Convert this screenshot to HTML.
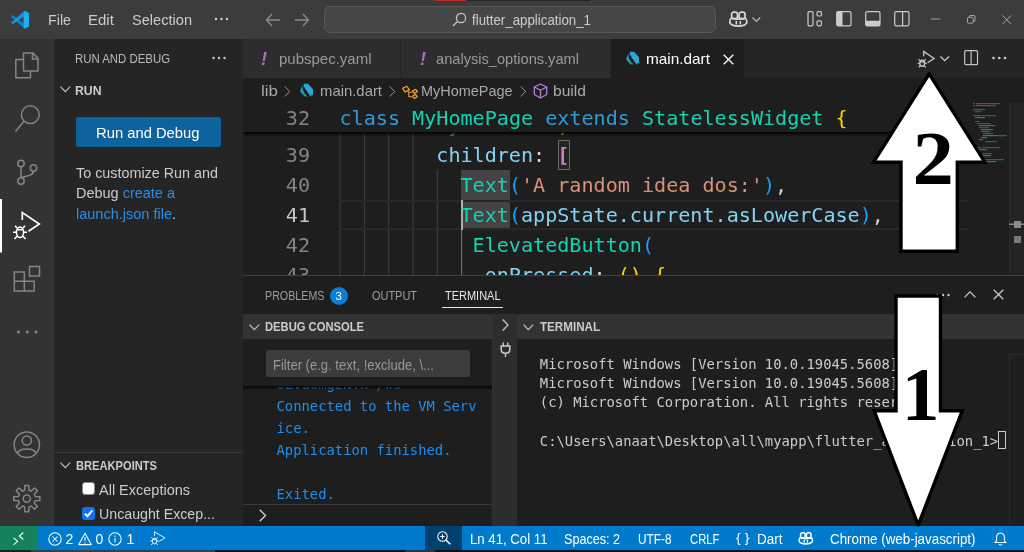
<!DOCTYPE html>
<html lang="en"><head>
<meta charset="utf-8">
<title>main.dart - flutter_application_1 - Visual Studio Code</title>
<style>
*{box-sizing:border-box;margin:0;padding:0}
html,body{width:1024px;height:552px;overflow:hidden;background:#1e1e1e}
body{position:relative;font-family:"Liberation Sans",sans-serif;color:#ccc;font-size:15px}
.abs{position:absolute}
.t{position:absolute;white-space:nowrap;line-height:20px;height:20px}
.mono{font-family:"DejaVu Sans Mono","Liberation Mono",monospace}
svg{position:absolute;overflow:visible}
.ic{fill:none;stroke:#858585;stroke-width:1.5}
/* title bar */
#title{left:0;top:0;width:1024px;height:39px;background:#3c3c3c}
#title .t{font-size:15px;color:#cccccc;top:10px}
#cmd{left:324px;top:6px;width:392px;height:27px;border-radius:6px;background:#464646;border:1px solid #575757}
/* activity bar */
#act{left:0;top:39px;width:54px;height:487px;background:#333333}
/* sidebar */
#side{left:54px;top:39px;width:189px;height:487px;background:#252526}
#side .t{color:#cccccc}
/* editor */
#tabs{left:243px;top:39px;width:781px;height:39px;background:#252526}
.tab{position:absolute;top:0;height:39px;background:#2d2d2d}
#tabs .t{font-size:15px;top:9.900px;color:#9a9a9a}
#crumbs{left:243px;top:78px;width:781px;height:25px;background:#1e1e1e}
#crumbs .t{font-size:15px;color:#a9a9a9;top:3px}
#code{left:243px;top:103px;width:781px;height:172px;background:#1e1e1e;overflow:hidden}
.ln{position:absolute;left:0;width:781px;height:30px;line-height:30px;font-size:20.1px;white-space:pre}
.num{position:absolute;left:0;width:67px;text-align:right;color:#858585}
.src{position:absolute;left:96.500px;top:-0.400px;color:#d4d4d4}
.guide{position:absolute;width:1px;background:#404040}
.k{color:#2e9bdb}.c{color:#14d3b3}.v{color:#84d4f7}.s{color:#d8917a}.y{color:#ffd700}.m{color:#e06fdc;font-weight:bold}.b{color:#179fff}
/* panel */
#panel{left:243px;top:279px;width:781px;height:247px;background:#1e1e1e}
#panel .t{color:#ccc}
/* status */
#status{left:0;top:526px;width:1024px;height:24px;background:#007acc}
#status .t{font-size:14px;color:#fff;top:3px}
#status svg{stroke:#fff;fill:none;stroke-width:1.050}
</style>
</head>
<body>
<div id="app" style="position:absolute;left:0;top:0;width:1024px;height:552px;will-change:transform">

<!-- ================= TITLE BAR ================= -->
<div id="title" class="abs">
  <div class="abs" style="left:435px;top:0;width:31px;height:1px;background:#c62828"></div><div class="abs" style="left:466px;top:0;width:124px;height:1px;background:#262626"></div>
  <svg style="left:0;top:0" width="40" height="39" viewBox="0 0 40 39">
    <polygon points="10.900,16.700 12.500,15 23.700,23.200 23.700,27.800" fill="#0d83c9"></polygon>
    <polygon points="10.900,22.800 12.500,24.300 23.700,16.400 23.700,11.800" fill="#1497de"></polygon>
    <polygon points="23.500,12 24.700,10.800 29,13 29,26.500 24.700,28.700 23.500,27.500" fill="#1eaef3"></polygon>
  </svg>
  <span class="t" style="left: 48px; transform-origin: 0px 50%; transform: scaleX(0.9515);">File</span>
  <span class="t" style="left: 87.8px; transform-origin: 0px 50%; transform: scaleX(0.9977);">Edit</span>
  <span class="t" style="left: 132px; transform-origin: 0px 50%; transform: scaleX(0.9722);">Selection</span>
  <svg style="left:214px;top:17px" width="16" height="4"><circle cx="2" cy="2" r="1.2" fill="#d4d4d4"></circle><circle cx="7.500" cy="2" r="1.2" fill="#d4d4d4"></circle><circle cx="13" cy="2" r="1.2" fill="#d4d4d4"></circle></svg>
  <svg style="left:265px;top:13px" width="16" height="14" viewBox="0 0 16 14"><path d="M7 1 L1.5 7 L7 13 M1.5 7 H15" fill="none" stroke="#8b8b8b" stroke-width="1.3"></path></svg>
  <svg style="left:294px;top:13px" width="16" height="14" viewBox="0 0 16 14"><path d="M9 1 L14.500 7 L9 13 M14.500 7 H1" fill="none" stroke="#8b8b8b" stroke-width="1.3"></path></svg>
  <div id="cmd" class="abs"></div>
  <svg style="left:452px;top:12px" width="15" height="15" viewBox="0 0 15 15"><circle cx="9" cy="6" r="4.6" fill="none" stroke="#ccc" stroke-width="1.2"></circle><path d="M5.6 9.4 L1 14" stroke="#ccc" stroke-width="1.3"></path></svg>
  <span class="t" style="left: 472.3px; top: 9.5px; font-size: 14px; color: rgb(204, 204, 204); transform-origin: 0px 50%; transform: scaleX(0.9496);">flutter_application_1</span>
  <!-- copilot -->
  <svg style="left:729.300px;top:10.500px" width="18.600" height="16.600" viewBox="0 0 18.6 16.6"><g fill="none" stroke="#dadada" stroke-width="1.700"><rect x="2.600" y="1.100" width="5.900" height="6.600" rx="2.300"></rect><rect x="10.100" y="1.100" width="5.900" height="6.600" rx="2.300"></rect><path d="M2.700 6.900 C1.400 7.700 0.900 8.700 0.900 10 V12 C3 16.300 15.600 16.300 17.700 12 V10 C17.700 8.700 17.200 7.700 15.900 6.900 M2.800 7.500 C6 8.500 12.600 8.500 15.800 7.500"></path><path d="M7.300 10 V13.400 M11.300 10 V13.400" stroke-width="1.500"></path></g></svg>
  <svg style="left:752px;top:17px" width="9" height="6" viewBox="0 0 9 6"><path d="M0.500 0.500 L4.300 4.500 L8.200 0.500" fill="none" stroke="#c0c0c0" stroke-width="1.100"></path></svg>
  <!-- layout icons -->
  <svg style="left:807px;top:11.300px" width="16" height="16" viewBox="0 0 16 16"><rect x="1" y="0.700" width="5" height="14.200" rx="1.300" fill="none" stroke="#ccc" stroke-width="1.200"></rect><rect x="10" y="0.700" width="4.500" height="4.300" rx="1.200" fill="none" stroke="#ccc" stroke-width="1.200"></rect><rect x="10" y="9.800" width="4.500" height="5" rx="1.200" fill="none" stroke="#ccc" stroke-width="1.200"></rect></svg>
  <svg style="left:836px;top:11.300px" width="16" height="16" viewBox="0 0 16 16"><rect x="0.700" y="0.700" width="14.300" height="14.200" rx="1.600" fill="none" stroke="#ccc" stroke-width="1.200"></rect><path d="M2 0.700 H6.500 V14.900 H2 C1.200 14.900 0.700 14.400 0.700 13.600 V2 C0.700 1.200 1.200 0.700 2 0.700 Z" fill="#ccc"></path></svg>
  <svg style="left:865px;top:11.300px" width="16" height="16" viewBox="0 0 16 16"><rect x="0.700" y="0.700" width="14.300" height="14.200" rx="1.600" fill="none" stroke="#ccc" stroke-width="1.200"></rect><path d="M0.700 9.800 H15 V13.600 C15 14.400 14.500 14.900 13.700 14.900 H2 C1.200 14.900 0.700 14.400 0.700 13.600 Z" fill="#ccc"></path></svg>
  <svg style="left:893.500px;top:11.300px" width="16" height="16" viewBox="0 0 16 16"><rect x="0.700" y="0.700" width="14.300" height="14.200" rx="1.600" fill="none" stroke="#ccc" stroke-width="1.200"></rect><path d="M8.600 0.700 V14.900" stroke="#ccc" stroke-width="1.200"></path></svg>
  <!-- window controls -->
  <svg style="left:931px;top:18px" width="10" height="2"><path d="M0 1 H9.500" stroke="#9a9a9a" stroke-width="1"></path></svg>
  <svg style="left:967px;top:14.500px" width="9" height="9" viewBox="0 0 9 9"><rect x="0.500" y="2.300" width="5.700" height="5.900" rx="1" fill="none" stroke="#a8a8a8" stroke-width="1"></rect><path d="M2.300 2.300 V1.500 C2.300 0.900 2.700 0.500 3.300 0.500 H7 C7.600 0.500 8 0.900 8 1.500 V5.500 C8 6.100 7.600 6.500 7 6.500 H6.200" fill="none" stroke="#a8a8a8" stroke-width="1"></path></svg>
  <svg style="left:1002px;top:14.500px" width="10" height="10" viewBox="0 0 10 10"><path d="M0.500 0.500 L9 9 M9 0.500 L0.500 9" stroke="#a8a8a8" stroke-width="1"></path></svg>
</div>

<!-- ================= ACTIVITY BAR ================= -->
<div id="act" class="abs">
  <!-- coordinates inside are page coords minus (0,39) ; use a page-coord svg instead -->
</div>
<svg id="acticons" style="left:0;top:0" width="54" height="552" viewBox="0 0 54 552">
  <!-- files -->
  <path class="ic" d="M23.500 71 V53 H33 L38 58.500 V71 Z M32.500 53 V59 H38" stroke-linejoin="round"></path>
  <path class="ic" d="M23 59.500 H15.800 V77.700 H30.500 V71.500" stroke-linejoin="round"></path>
  <!-- search -->
  <circle class="ic" cx="30.300" cy="114.700" r="8.900"></circle>
  <path class="ic" d="M24 121.200 L15.500 131.500"></path>
  <!-- source control -->
  <circle class="ic" cx="21" cy="163.500" r="3.200"></circle>
  <circle class="ic" cx="21" cy="181" r="3.200"></circle>
  <circle class="ic" cx="33.500" cy="168" r="3.200"></circle>
  <path class="ic" d="M21 166.700 V177.800 M33.500 171.200 C33.500 176 27 175.500 21.500 177.500"></path>
  <!-- run and debug (active) -->
  <rect x="0" y="199" width="2" height="53.500" fill="#ffffff"></rect>
  <path d="M22.300 220 V212.500 L39.300 224 L28.500 231.200" fill="none" stroke="#fff" stroke-width="1.700" stroke-linejoin="miter"></path>
  <g stroke="#fff" fill="none" stroke-width="1.600">
    <ellipse cx="20" cy="232.300" rx="3.600" ry="5.200"></ellipse>
    <path d="M17 228 L15 225.800 M23 228 L25 225.800 M16.400 232.300 H13 M23.600 232.300 H27 M17 236.300 L14.500 239 M23 236.300 L25.500 239 M17.300 229.800 H22.700"></path>
  </g>
  <!-- extensions -->
  <path class="ic" d="M14.300 272 H24.300 V281.300 H34.200 V291 H14.300 Z M14.300 281.300 H24.300 V291"></path>
  <rect class="ic" x="29.500" y="266.500" width="10" height="9.500"></rect>
  <!-- more -->
  <circle cx="18.500" cy="332" r="1.500" fill="#858585"></circle><circle cx="27.300" cy="332" r="1.500" fill="#858585"></circle><circle cx="36" cy="332" r="1.500" fill="#858585"></circle>
  <!-- account -->
  <circle class="ic" cx="26.800" cy="444.800" r="12.700"></circle>
  <circle class="ic" cx="26.800" cy="440.500" r="4.600"></circle>
  <path class="ic" d="M17.500 453.500 C19 447.500 34.500 447.500 36 453.500"></path>
  <!-- gear -->
  <g transform="translate(26.800 498.600)">
    <path class="ic" stroke-linejoin="round" d="M-2.20 -8.31 L-1.96 -13.05 L1.96 -13.05 L2.20 -8.31 L4.32 -7.44 L7.84 -10.62 L10.62 -7.84 L7.44 -4.32 L8.31 -2.20 L13.05 -1.96 L13.05 1.96 L8.31 2.20 L7.44 4.32 L10.62 7.84 L7.84 10.62 L4.32 7.44 L2.20 8.31 L1.96 13.05 L-1.96 13.05 L-2.20 8.31 L-4.32 7.44 L-7.84 10.62 L-10.62 7.84 L-7.44 4.32 L-8.31 2.20 L-13.05 1.96 L-13.05 -1.96 L-8.31 -2.20 L-7.44 -4.32 L-10.62 -7.84 L-7.84 -10.62 L-4.32 -7.44 Z"></path>
    <circle class="ic" cx="0" cy="0" r="3.600"></circle>
  </g>
</svg>

<!-- ================= SIDEBAR ================= -->
<div id="side" class="abs"></div>
<div id="sidec" class="abs" style="left:0;top:0;width:243px;height:526px">
  <span class="t" style="left: 75px; top: 49px; font-size: 12.5px; color: rgb(187, 187, 187); transform-origin: 0px 50%; transform: scaleX(0.9118);">RUN AND DEBUG</span>
  <svg style="left:212px;top:56px" width="16" height="4"><circle cx="1.500" cy="2" r="1.200" fill="#ccc"></circle><circle cx="7" cy="2" r="1.200" fill="#ccc"></circle><circle cx="12.500" cy="2" r="1.200" fill="#ccc"></circle></svg>
  <svg style="left:60px;top:86px" width="11" height="7" viewBox="0 0 11 7"><path d="M0.500 0.700 L5.300 5.700 L10.200 0.700" fill="none" stroke="#c5c5c5" stroke-width="1.200"></path></svg>
  <span class="t" style="left: 75.2px; top: 81px; font-size: 12.5px; font-weight: bold; color: rgb(204, 204, 204); transform-origin: 0px 50%; transform: scaleX(0.9781);">RUN</span>
  <div class="abs" style="left:76px;top:117px;width:145px;height:30px;background:#0e639c;border-radius:2px"></div>
  <span class="t" style="left: 96.2px; top: 122.7px; font-size: 15px; color: rgb(255, 255, 255); transform-origin: 0px 50%; transform: scaleX(0.9848);">Run and Debug</span>
  <span class="t" style="left: 76px; top: 163px; font-size: 15px; transform-origin: 0px 50%; transform: scaleX(0.9567);">To customize Run and</span>
  <span class="t" style="left: 76px; top: 183px; font-size: 15px; transform-origin: 0px 50%; transform: scaleX(0.9651);">Debug <span style="color:#2a8eea">create a</span></span>
  <span class="t" style="left: 76px; top: 203.5px; font-size: 15px; transform-origin: 0px 50%; transform: scaleX(0.9671);"><span style="color:#2a8eea">launch.json file</span>.</span>
  <!-- breakpoints -->
  <div class="abs" style="left:54px;top:452px;width:189px;height:1px;background:#3a3a3b"></div>
  <svg style="left:60px;top:462px" width="11" height="7" viewBox="0 0 11 7"><path d="M0.500 0.700 L5.300 5.700 L10.200 0.700" fill="none" stroke="#c5c5c5" stroke-width="1.200"></path></svg>
  <span class="t" style="left: 75.5px; top: 455.5px; font-size: 12.5px; font-weight: bold; color: rgb(204, 204, 204); transform-origin: 0px 50%; transform: scaleX(0.8903);">BREAKPOINTS</span>
  <div class="abs" style="left:82px;top:482px;width:13px;height:13px;background:#fff;border:1px solid #8a8a8a;border-radius:3px"></div>
  <span class="t" style="left: 98.8px; top: 479.5px; font-size: 15px; transform-origin: 0px 50%; transform: scaleX(0.9658);">All Exceptions</span>
  <div class="abs" style="left:82px;top:507px;width:13px;height:13px;background:#1270f2;border-radius:3px"></div>
  <svg style="left:82px;top:507px" width="13" height="13" viewBox="0 0 13 13"><path d="M2.800 6.600 L5.400 9.300 L10.300 3.400" fill="none" stroke="#fff" stroke-width="2"></path></svg>
  <span class="t" style="left: 98.8px; top: 504px; font-size: 15px; transform-origin: 0px 50%; transform: scaleX(0.9463);">Uncaught Excep...</span>
</div>

<!-- ================= EDITOR TABS ================= -->
<div id="tabs" class="abs">
  <div class="tab" style="left:0;width:157px"></div>
  <div class="tab" style="left:158px;width:209px"></div>
  <div class="tab" style="left:368px;width:133px;background:#1e1e1e"></div>
  <span class="t" style="left:18px;font-weight:bold;font-style:italic;color:#a074c4;font-size:18px;top:9.500px">!</span>
  <span class="t" style="left: 35.5px; transform-origin: 0px 50%; transform: scaleX(0.9993);">pubspec.yaml</span>
  <span class="t" style="left:177px;font-weight:bold;font-style:italic;color:#a074c4;font-size:18px;top:9.500px">!</span>
  <span class="t" style="left: 193px; transform-origin: 0px 50%; transform: scaleX(0.9744);">analysis_options.yaml</span>
  <!-- dart icon -->
  <svg style="left:382.500px;top:12px" width="13.500" height="14.500" viewBox="0 0 13.5 14.5"><path d="M4.600 0.600 L8.300 1 L13 6.300 V12.300 H11.200 V13.800 L9.800 12.400 L3.400 3 Z" fill="#29a9d3"></path><path d="M3.300 1.600 L0.400 6.600 C0 8 0.400 9 1.300 10 L4.600 13.400 H7.800 L5.500 11.500 C3.500 9 2.600 6 2.500 4 Z" fill="#2496bd"></path></svg>
  <span class="t" style="left: 402.8px; color: rgb(255, 255, 255); transform-origin: 0px 50%; transform: scaleX(1.0235);">main.dart</span>
  <svg style="left:480px;top:14.500px" width="11" height="11" viewBox="0 0 11 11"><path d="M0.700 0.700 L10.300 10.300 M10.300 0.700 L0.700 10.300" stroke="#ffffff" stroke-width="1.300"></path></svg>
  <!-- editor actions -->
  <svg style="left:674px;top:11px" width="20" height="18" viewBox="0 0 20 18">
    <path d="M6.700 6.200 V1.500 L17.100 8.500 L10.600 12.700" fill="none" stroke="#d0d0d0" stroke-width="1.200"></path>
    <g stroke="#d0d0d0" fill="none" stroke-width="1.100"><ellipse cx="5.200" cy="13.200" rx="2.400" ry="3.100" stroke-width="1.300"></ellipse><path d="M3.100 10.600 L1.600 9.100 M7.300 10.600 L8.800 9.100 M2.700 13.200 H0.500 M7.700 13.200 H9.900 M3.100 15.800 L1.600 17.300 M7.300 15.800 L8.800 17.300 M3 11.900 H7.400"></path></g>
  </svg>
  <svg style="left:697px;top:17px" width="10" height="6" viewBox="0 0 10 6"><path d="M0.500 0.500 L4.700 4.700 L9 0.500" fill="none" stroke="#ccc" stroke-width="1.200"></path></svg>
  <svg style="left:721px;top:11px" width="15" height="16" viewBox="0 0 15 16"><rect x="0.700" y="0.700" width="12.800" height="14" rx="1" fill="none" stroke="#c4c4c4" stroke-width="1.200"></rect><path d="M7.100 0.700 V14.700" stroke="#c4c4c4" stroke-width="1.200"></path></svg>
  <svg style="left:749px;top:17px" width="16" height="4"><circle cx="1.500" cy="2" r="1.300" fill="#ccc"></circle><circle cx="7.300" cy="2" r="1.300" fill="#ccc"></circle><circle cx="13" cy="2" r="1.300" fill="#ccc"></circle></svg>
</div>

<!-- ================= BREADCRUMBS ================= -->
<div id="crumbs" class="abs">
  <span class="t" style="left: 18px; transform-origin: 0px 50%; transform: scaleX(1.1322);">lib</span>
  <svg style="left:41px;top:8px" width="7" height="11" viewBox="0 0 7 11"><path d="M0.700 0.500 L5.700 5.500 L0.700 10.500" fill="none" stroke="#9a9a9a" stroke-width="1"></path></svg>
  <svg style="left:57px;top:4.500px" width="13.500" height="14.500" viewBox="0 0 13.5 14.5"><path d="M4.600 0.600 L8.300 1 L13 6.300 V12.300 H11.200 V13.800 L9.800 12.400 L3.400 3 Z" fill="#29a9d3"></path><path d="M3.300 1.600 L0.400 6.600 C0 8 0.400 9 1.300 10 L4.600 13.400 H7.800 L5.500 11.500 C3.500 9 2.600 6 2.500 4 Z" fill="#2496bd"></path></svg>
  <span class="t" style="left: 76.5px; transform-origin: 0px 50%; transform: scaleX(0.9915);">main.dart</span>
  <svg style="left:145.500px;top:8px" width="7" height="11" viewBox="0 0 7 11"><path d="M0.700 0.500 L5.700 5.500 L0.700 10.500" fill="none" stroke="#9a9a9a" stroke-width="1"></path></svg>
  <!-- class symbol -->
  <svg style="left:159px;top:8px" width="16" height="13" viewBox="0 0 16 13"><g fill="none" stroke="#ee9d28" stroke-width="1.300" stroke-linejoin="round"><path d="M0.600 2.400 L4.600 0.200 L7.400 3.600 L3.300 6 Z"></path><path d="M5.600 4.800 L6.800 6.300 H10.600 M6.800 6.300 V10.800 H10.600" stroke-width="1.100"></path><path d="M10.600 4.800 L13.800 3.300 L15.500 5.600 L12.300 7.300 Z"></path><path d="M10.600 10 L13.500 8.300 L15.200 10.700 L12.200 12.500 Z"></path></g></svg>
  <span class="t" style="left: 178px; transform-origin: 0px 50%; transform: scaleX(0.9627);">MyHomePage</span>
  <svg style="left:277px;top:8px" width="7" height="11" viewBox="0 0 7 11"><path d="M0.700 0.500 L5.700 5.500 L0.700 10.500" fill="none" stroke="#9a9a9a" stroke-width="1"></path></svg>
  <!-- method cube -->
  <svg style="left:290px;top:5px" width="15" height="16" viewBox="0 0 15 16"><g fill="none" stroke="#b180d7" stroke-width="1.300" stroke-linejoin="round"><path d="M7.500 1 L13.700 4 V11.500 L7.500 15 L1.300 11.500 V4 Z"></path><path d="M1.300 4 L7.500 7.300 L13.700 4 M7.500 7.300 V15"></path></g></svg>
  <span class="t" style="left: 310px; transform-origin: 0px 50%; transform: scaleX(1.0409);">build</span>
</div>

<!-- ================= CODE ================= -->
<div id="code" class="abs mono">
  <!-- indent guides (code-local coords: page x-243, page y-103) -->
  <svg style="left:0;top:0" width="781" height="176" viewBox="0 0 781 176"><g stroke="#3d3d3d" stroke-width="1.150">
    <path d="M97 30 V176 M121.400 30 V176 M145.700 30 V176 M170 30 V176 M194.300 67 V176"></path>
    <path d="M218.600 127 V176" stroke="#707070"></path></g>
  </svg>
  <!-- word highlights -->
  <div class="abs" style="left:217.500px;top:67px;width:49.500px;height:60px;background:#444444"></div>
  <!-- current line -->
  <div class="abs" style="left:97px;top:97px;width:628px;height:30px;border-top:2px solid #282828;border-bottom:2px solid #282828"></div>
  <!-- bracket match -->
  <div class="abs" style="left:315px;top:37px;width:12px;height:30px;border:1px solid #6a6a6a;background:#1d291d"></div>
  <!-- cursor -->
  <div class="abs" style="left:218px;top:97px;width:2px;height:30px;background:#aeafad"></div>

  <div class="ln" style="top:7px"><span class="src">         <span class="k">y</span>        <span class="y">,</span></span></div>
  <div class="ln" style="top:37px"><span class="num">39</span><span class="src">        <span class="v">children</span>: <span class="m">[</span></span></div>
  <div class="ln" style="top:67px"><span class="num">40</span><span class="src">          <span class="c">Text</span><span class="b">(</span><span class="s">'A random idea dos:'</span><span class="b">)</span>,</span></div>
  <div class="ln" style="top:97px"><span class="num" style="color:#c6c6c6">41</span><span class="src">          <span class="c">Text</span><span class="b">(</span><span class="v">appState.current.asLowerCase</span><span class="b">)</span>,</span></div>
  <div class="ln" style="top:127px"><span class="num">42</span><span class="src">           <span class="c">ElevatedButton</span><span class="b">(</span></span></div>
  <div class="ln" style="top:157px"><span class="num">43</span><span class="src">            <span class="v">onPressed</span>: <span class="y">()</span> <span class="y">{</span></span></div>

  <!-- sticky scroll -->
  <div class="abs" style="left:0;top:0;width:725px;height:29px;background:#1e1e1e;box-shadow:0 2px 3px 0 #000;clip-path:inset(0 0 -8px 0)"></div>
  <div class="ln" style="top:0"><span class="num">32</span><span class="src"><span class="k">class</span> <span class="c">MyHomePage</span> <span class="k">extends</span> <span class="c">StatelessWidget</span> <span class="y">{</span></span></div>

  <!-- minimap -->
  <svg style="left:725px;top:0" width="56" height="176" viewBox="0 0 56 176">
    <rect x="41" y="0" width="15" height="176" fill="#1e1e1e"></rect>
    <rect x="41" y="0" width="1" height="176" fill="#2a2a2a"></rect>
    <rect x="41" y="0" width="15" height="176" fill="#2a2a2a" opacity="0.55"></rect>
    <g opacity="0.550">
      <rect x="5" y="0" width="2" height="1.200" fill="#2e9bdb"></rect><rect x="8" y="0" width="24" height="1.200" fill="#b5705c"></rect>
      <rect x="5" y="2" width="2" height="1.200" fill="#2e9bdb"></rect><rect x="8" y="2" width="20" height="1.200" fill="#b5705c"></rect>
      <rect x="5" y="6" width="12" height="1.200" fill="#2e9bdb"></rect>
      <rect x="7" y="8" width="6" height="1.200" fill="#14a890"></rect>
      <rect x="5" y="12" width="8" height="1.200" fill="#2e9bdb"></rect><rect x="14" y="12" width="14" height="1.200" fill="#14a890"></rect>
      <rect x="7" y="14" width="10" height="1.200" fill="#7ab"></rect>
      <rect x="7" y="18" width="5" height="1.200" fill="#2e9bdb"></rect>
      <rect x="9" y="20" width="14" height="1.200" fill="#14a890"></rect>
      <rect x="11" y="22" width="16" height="1.200" fill="#7ab"></rect><rect x="11" y="24" width="10" height="1.200" fill="#14a890"></rect>
      <rect x="13" y="26" width="12" height="1.200" fill="#7ab"></rect><rect x="13" y="28" width="9" height="1.200" fill="#b5705c"></rect>
      <rect x="15" y="30" width="10" height="1.200" fill="#14a890"></rect><rect x="15" y="32" width="22" height="1.200" fill="#7ab"></rect><rect x="30" y="32" width="9" height="1.200" fill="#14a890"></rect>
      <rect x="13" y="34" width="6" height="1.200" fill="#999"></rect>
      <rect x="11" y="36" width="4" height="1.200" fill="#999"></rect><rect x="17" y="38" width="12" height="1.200" fill="#14a890"></rect>
      <rect x="5" y="44" width="8" height="1.200" fill="#2e9bdb"></rect><rect x="14" y="44" width="18" height="1.200" fill="#14a890"></rect>
      <rect x="7" y="46" width="12" height="1.200" fill="#7ab"></rect>
      <rect x="7" y="50" width="6" height="1.200" fill="#2e9bdb"></rect><rect x="14" y="50" width="10" height="1.200" fill="#14a890"></rect>
      <rect x="9" y="52" width="14" height="1.200" fill="#7ab"></rect>
      <rect x="5" y="56" width="8" height="1.200" fill="#2e9bdb"></rect><rect x="14" y="56" width="22" height="1.200" fill="#14a890"></rect>
      <rect x="7" y="58" width="10" height="1.200" fill="#14a890"></rect><rect x="18" y="58" width="10" height="1.200" fill="#7ab"></rect>
    </g>
    <!-- overview ruler marks -->
    <rect x="41" y="120.500" width="15" height="1.500" fill="#8a8a8a"></rect>
    <rect x="46" y="118" width="7" height="7" fill="#8a8a8a"></rect>
    <rect x="46" y="133" width="7" height="7" fill="#7a7a7a"></rect>
  </svg>
</div>

<!-- ================= PANEL ================= -->
<div id="panel" class="abs">
  <div class="abs" style="left:0;top:-4px;width:781px;height:1px;background:#414141"></div>
  <!-- panel-local coords: page x-243, page y-279 -->
  <span class="t" style="left: 22.3px; top: 6.5px; font-size: 12.5px; color: rgb(157, 157, 157); transform-origin: 0px 50%; transform: scaleX(0.8565);">PROBLEMS</span>
  <div class="abs" style="left:86.500px;top:8px;width:18px;height:18px;border-radius:9px;background:#0a7fd4"></div>
  <span class="t" style="left:92.500px;top:7px;font-size:11.500px;color:#fff">3</span>
  <span class="t" style="left: 129px; top: 6.5px; font-size: 12.5px; color: rgb(157, 157, 157); transform-origin: 0px 50%; transform: scaleX(0.8756);">OUTPUT</span>
  <span class="t" style="left: 201.5px; top: 6.5px; font-size: 12.5px; color: rgb(231, 231, 231); transform-origin: 0px 50%; transform: scaleX(0.8781);">TERMINAL</span>
  <div class="abs" style="left:198.500px;top:28px;width:61px;height:1px;background:#e7e7e7"></div>
  <!-- panel actions -->
  <svg style="left:692.500px;top:14px" width="16" height="4"><circle cx="1.500" cy="2" r="1.200" fill="#ccc"></circle><circle cx="7" cy="2" r="1.200" fill="#ccc"></circle><circle cx="12.500" cy="2" r="1.200" fill="#ccc"></circle></svg>
  <svg style="left:721px;top:12px" width="12" height="7" viewBox="0 0 12 7"><path d="M0.500 6.300 L6 0.800 L11.500 6.300" fill="none" stroke="#ccc" stroke-width="1.200"></path></svg>
  <svg style="left:750px;top:9.500px" width="11" height="11" viewBox="0 0 11 11"><path d="M0.700 0.700 L10.300 10.300 M10.300 0.700 L0.700 10.300" stroke="#ccc" stroke-width="1.300"></path></svg>

  <!-- debug console header -->
  <div class="abs" style="left:0;top:35px;width:249px;height:25px;background:#333333"></div>
  <svg style="left:6px;top:44.500px" width="11" height="7" viewBox="0 0 11 7"><path d="M0.500 0.700 L5.300 5.700 L10.200 0.700" fill="none" stroke="#c5c5c5" stroke-width="1.200"></path></svg>
  <span class="t" style="left: 22.2px; top: 37.5px; font-size: 12.5px; font-weight: bold; color: rgb(204, 204, 204); transform-origin: 0px 50%; transform: scaleX(0.8964);">DEBUG CONSOLE</span>
  <!-- middle column -->
  <div class="abs" style="left:249px;top:35px;width:25px;height:212px;background:#2d2d2d;border-left:1px solid #313131"></div>
  <svg style="left:258.800px;top:39.800px" width="7" height="12" viewBox="0 0 7 12"><path d="M0.700 0.500 L6 6 L0.700 11.500" fill="none" stroke="#ccc" stroke-width="1.200"></path></svg>
  <svg style="left:257px;top:62.500px" width="11" height="16" viewBox="0 0 11 16"><path d="M3.300 0.500 V4 M7.700 0.500 V4 M5.500 11.300 V15" fill="none" stroke="#ccc" stroke-width="1.400"></path><path d="M1.200 4 H9.800 V7.500 C9.800 10 8 11.300 5.500 11.300 C3 11.300 1.200 10 1.200 7.500 Z" fill="none" stroke="#ccc" stroke-width="1.500"></path></svg>
  <!-- filter -->
  <div class="abs" style="left:23px;top:71px;width:204px;height:27px;background:#3c3c3c;border-radius:2px"></div>
  <span class="t" style="left: 30px; top: 76px; font-size: 14.5px; color: rgb(152, 152, 152); transform-origin: 0px 50%; transform: scaleX(0.8999);">Filter (e.g. text, !exclude, \...</span>
  <!-- debug output -->
  <div class="abs mono" style="left:0;top:108px;width:249px;height:119px;overflow:hidden;font-size:13.850px;color:#1f8eee;white-space:pre">
    <div class="abs" style="left:33.500px;top:-13.700px;line-height:22px">6Zvu0mgzNTk=/ws
Connected to the VM Serv
ice.
Application finished.

Exited.</div>
  </div>
  <div class="abs" style="left:0;top:107px;width:249px;height:4px;background:linear-gradient(rgba(0,0,0,0.700),rgba(0,0,0,0.450) 55%,rgba(0,0,0,0))"></div>
  <div class="abs" style="left:0;top:225px;width:249px;height:1px;background:#3a3a3a"></div>
  <svg style="left:15.500px;top:230px" width="8" height="13" viewBox="0 0 8 13"><path d="M0.700 0.700 L6.500 6.500 L0.700 12.300" fill="none" stroke="#ccc" stroke-width="1.400"></path></svg>

  <!-- terminal header -->
  <div class="abs" style="left:274px;top:35px;width:507px;height:25px;background:#333333"></div>
  <svg style="left:280px;top:44.500px" width="11" height="7" viewBox="0 0 11 7"><path d="M0.500 0.700 L5.300 5.700 L10.200 0.700" fill="none" stroke="#c5c5c5" stroke-width="1.200"></path></svg>
  <span class="t" style="left: 297px; top: 37.5px; font-size: 12.5px; font-weight: bold; color: rgb(204, 204, 204); transform-origin: 0px 50%; transform: scaleX(0.9291);">TERMINAL</span>
  <!-- terminal text -->
  <div class="abs mono" style="left:296.800px;top:75.800px;font-size:13.850px;line-height:19.200px;color:#cccccc;white-space:pre">Microsoft Windows [Version 10.0.19045.5608]
Microsoft Windows [Version 10.0.19045.5608]
(c) Microsoft Corporation. All rights reserved.

C:\Users\anaat\Desktop\all\myapp\flutter_application_1&gt;</div>
  <div class="abs" style="left:754.500px;top:152px;width:8px;height:18px;border:1px solid #cccccc"></div>
  <!-- terminal scrollbar -->
  <div class="abs" style="left:766px;top:75px;width:15px;height:172px;background:#1f1f1f;border-left:1px solid #2c2c2c;border-top:1px solid #2c2c2c"></div>
</div>

<!-- ================= STATUS BAR ================= -->
<div id="status" class="abs">
  <div class="abs" style="left:0;top:0;width:38px;height:24px;background:#16825d"></div>
  <svg style="left:13px;top:5.500px" width="11" height="13" viewBox="0 0 11 13"><path d="M0.500 5.800 L4.600 9.300 L0.500 12.800 M10.300 0.500 L6.300 4 L10.300 7.500"></path></svg>
  <!-- errors -->
  <svg style="left:47.500px;top:5.500px" width="14" height="14" viewBox="0 0 14 14"><circle cx="7" cy="7" r="6.200"></circle><path d="M4.500 4.500 L9.500 9.500 M9.500 4.500 L4.500 9.500"></path></svg>
  <span class="t" style="left:65.500px">2</span>
  <svg style="left:78px;top:5.500px" width="14" height="14" viewBox="0 0 14 14"><path d="M7 1.200 L13.200 12.600 H0.800 Z" stroke-linejoin="round"></path><path d="M7 5 V9 M7 10.200 V11.400"></path></svg>
  <span class="t" style="left:95.500px">0</span>
  <svg style="left:107.500px;top:5.500px" width="14" height="14" viewBox="0 0 14 14"><circle cx="7" cy="7" r="6.200"></circle><path d="M7 6 V10.200 M7 3.600 V4.900"></path></svg>
  <span class="t" style="left:126.500px">1</span>
  <svg style="left:149.500px;top:4.500px" width="17" height="15" viewBox="0 0 20 18">
    <path d="M5.300 5.800 V1 L17.800 8.300 L10.500 12.500"></path>
    <g stroke-width="1.100"><ellipse cx="5.200" cy="12" rx="2.600" ry="3.500"></ellipse><path d="M3 9 L1.500 7.500 M7.400 9 L8.900 7.500 M2.600 12 H0.300 M7.800 12 H10.100 M3 15 L1.300 16.800 M7.400 15 L9.100 16.800 M3 10.400 H7.400"></path></g>
  </svg>
  <!-- zoom -->
  <div class="abs" style="left:424.500px;top:0;width:37.500px;height:24px;background:#00416f"></div>
  <svg style="left:436.500px;top:5px" width="14" height="14" viewBox="0 0 14 14"><circle cx="5.500" cy="5.500" r="4.700"></circle><path d="M9 9 L13.300 13.300" stroke-width="1.600"></path><path d="M3.300 5.500 H7.700 M5.500 3.300 V7.700"></path></svg>
  <span class="t" style="left: 470px; transform-origin: 0px 50%; transform: scaleX(0.9422);">Ln 41, Col 11</span>
  <span class="t" style="left: 564.3px; transform-origin: 0px 50%; transform: scaleX(0.8994);">Spaces: 2</span>
  <span class="t" style="left: 638px; transform-origin: 0px 50%; transform: scaleX(0.8444);">UTF-8</span>
  <span class="t" style="left: 690px; transform-origin: 0px 50%; transform: scaleX(0.8068);">CRLF</span>
  <span class="t" style="left: 736.3px; font-size: 13px; top: 2px; transform-origin: 0px 50%; transform: scaleX(1.0978);">{ }</span>
  <span class="t" style="left: 756.5px; transform-origin: 0px 50%; transform: scaleX(0.964);">Dart</span>
  <svg style="left:798px;top:5.800px" width="15.600" height="13" viewBox="0 0 18.6 16.6"><g stroke-width="1.900"><rect x="2.600" y="1.100" width="5.900" height="6.600" rx="2.300"></rect><rect x="10.100" y="1.100" width="5.900" height="6.600" rx="2.300"></rect><path d="M2.700 6.900 C1.400 7.700 0.900 8.700 0.900 10 V12 C3 16.300 15.600 16.300 17.700 12 V10 C17.700 8.700 17.200 7.700 15.900 6.900 M2.800 7.500 C6 8.500 12.600 8.500 15.800 7.500"></path><path d="M7.300 10 V13.400 M11.300 10 V13.400" stroke-width="1.700"></path></g></svg>
  <span class="t" style="left: 830px; transform-origin: 0px 50%; transform: scaleX(0.9542);">Chrome (web-javascript)</span>
  <svg style="left:993.500px;top:5.500px" width="13" height="14" viewBox="0 0 13 14"><path d="M6.500 1 C3.800 1 2.600 3 2.600 5.500 V8.500 L1 10.500 H12 L10.400 8.500 V5.500 C10.400 3 9.200 1 6.500 1 Z M5 12 C5.300 13.300 7.700 13.300 8 12" stroke-linejoin="round"></path></svg>
</div>
<!-- bottom strip -->
<div class="abs" style="left:0;top:550px;width:1024px;height:2px;background:#111111"></div>
<div class="abs" style="left:0;top:550px;width:31px;height:2px;background:#1f1f1f"></div>
<div class="abs" style="left:31px;top:550px;width:184px;height:2px;background:#3e3e3e"></div>
<div class="abs" style="left:405px;top:550px;width:30px;height:2px;background:#333333"></div>

<!-- ================= ARROWS ================= -->
<svg id="arrows" style="left:0;top:0" width="1024" height="552" viewBox="0 0 1024 552">
  <defs><clipPath id="clipA"><rect x="0" y="71.800" width="1024" height="454.800"></rect></clipPath></defs>
  <g clip-path="url(#clipA)">
  <polygon points="929.200,73.900 984.900,162.200 957.300,162.200 957.300,251.300 901,251.300 901,162.200 873.500,162.200" fill="#fff" stroke="#000" stroke-width="3.400" stroke-linejoin="miter" stroke-miterlimit="10"></polygon>
  <polygon points="896,296 940.500,296 940.500,410.700 962.300,410.700 918.200,525.200 874.100,410.700 896,410.700" fill="#fff" stroke="#000" stroke-width="3.400" stroke-linejoin="miter" stroke-miterlimit="10"></polygon>
  </g>
  <text transform="translate(933.200 184) scale(1.090 1)" x="0" y="0" font-family="Liberation Serif,serif" font-weight="bold" font-size="76" text-anchor="middle" fill="#000">2</text>
  <text x="920.600" y="420" font-family="Liberation Serif,serif" font-weight="bold" font-size="75.500" text-anchor="middle" fill="#000">1</text>
</svg>

</div>


</body></html>
